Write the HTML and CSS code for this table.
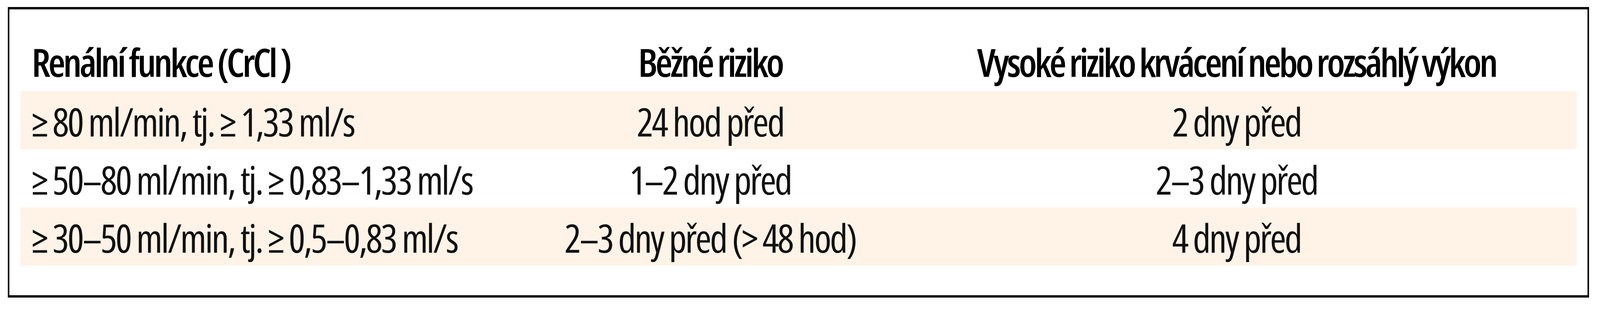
FILE: index.html
```html
<!DOCTYPE html>
<html lang="cs"><head><meta charset="utf-8"><title>Renální funkce</title><link rel="stylesheet" href="styles.css"></head>
<body>
<div class="box">
<table class="tbl">
<colgroup><col class="c1"><col class="c2"><col class="c3"></colgroup>
<thead>
<tr><th class="left">Renální funkce (CrCl )</th><th>Běžné riziko</th><th>Vysoké riziko krvácení nebo rozsáhlý výkon</th></tr>
</thead>
<tbody>
<tr class="shade"><td class="left">≥ 80 ml/min, tj. ≥ 1,33 ml/s</td><td>24 hod před</td><td>2 dny před</td></tr>
<tr><td class="left">≥ 50–80 ml/min, tj. ≥ 0,83–1,33 ml/s</td><td>1–2 dny před</td><td>2–3 dny před</td></tr>
<tr class="shade"><td class="left">≥ 30–50 ml/min, tj. ≥ 0,5–0,83 ml/s</td><td>2–3 dny před (&gt; 48 hod)</td><td>4 dny před</td></tr>
</tbody>
</table>
</div>
</body></html>
```
FILE: styles.css
```css
html,body{margin:0;padding:0;background:#fff}
body{font-family:"Open Sans","Noto Sans","DejaVu Sans",sans-serif;font-stretch:75%;color:#111}
.box{box-sizing:border-box;width:4048px;margin:18px 0 0 20px;border-style:solid;border-color:#000;border-width:6px 4px;padding:0 28px 76px 28px}
.tbl{width:3984px;table-layout:fixed;border-collapse:collapse;border-spacing:0}
.c1{width:1289px}
.c2{width:954px}
.c3{width:1741px}
.tbl th,.tbl td{padding:0;text-align:center;white-space:nowrap;font-size:100px}
.tbl th{font-weight:600;color:#000;line-height:143px;padding-top:63px;padding-bottom:4px;letter-spacing:-5.6px}
.tbl td{font-weight:400;line-height:143px;padding-top:6px;letter-spacing:-4px}
.tbl .left{text-align:left;padding-left:29px}
.shade td{background:#fef3e6}
```
